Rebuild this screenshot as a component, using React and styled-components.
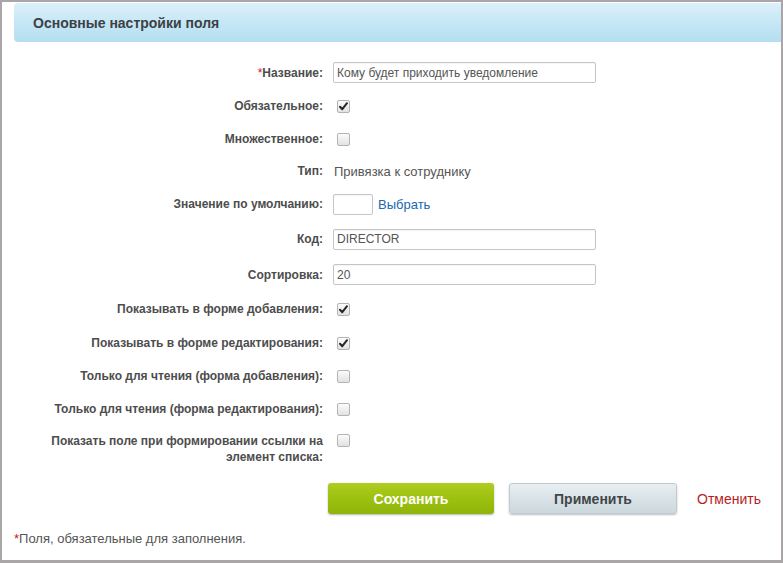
import React from "react";
import styled, { createGlobalStyle } from "styled-components";

const Global = createGlobalStyle`
  html, body { margin: 0; padding: 0; background: #fff; }
  body { font-family: "Liberation Sans", Arial, sans-serif; }
  * { box-sizing: border-box; }
`;

const Panel = styled.div`
  width: 783px;
  height: 563px;
  border: 2px solid #aaa6a8;
  border-bottom-width: 3px;
  background: #fff;
  display: flex;
  flex-direction: column;
`;

const Header = styled.div`
  margin: 1px 0 0 12px;
  height: 39px;
  display: flex;
  align-items: center;
  padding-left: 19px;
  border-radius: 4px 0 0 4px;
  background: linear-gradient(to bottom, #dbf0fa 0%, #c6e7f5 50%, #b3def0 100%);
  font-size: 14px;
  font-weight: bold;
  color: #3c4145;
`;

const Form = styled.div`
  margin-top: 14px;
  display: grid;
  grid-template-columns: 321px 1fr;
  column-gap: 10px;
`;

const Label = styled.div`
  height: ${(p) => p.$h}px;
  display: flex;
  align-items: ${(p) => (p.$top ? "flex-start" : "center")};
  justify-content: flex-end;
  padding-top: ${(p) => (p.$top ? 8 : 0)}px;
  text-align: right;
  font-size: 12px;
  line-height: 16px;
  font-weight: bold;
  color: #4d4d4d;
`;

const Req = styled.span`
  color: #d0142c;
  font-weight: normal;
`;

const Field = styled.div`
  height: ${(p) => p.$h}px;
  display: flex;
  align-items: ${(p) => (p.$top ? "flex-start" : "center")};
  padding-top: ${(p) => (p.$top ? 9 : 0)}px;
  gap: 5px;
`;

const TextInput = styled.div`
  width: ${(p) => p.$w}px;
  height: 21px;
  border: 1px solid #c5c5c5;
  border-radius: 2px;
  background: #fff;
  padding: 0 0 0 3px;
  display: flex;
  align-items: center;
  font-size: 12px;
  color: #555;
  box-shadow: inset 0 1px 1px rgba(0, 0, 0, 0.04);
`;

const Box = styled.span`
  width: 13px;
  height: 13px;
  margin-left: 4px;
  margin-top: ${(p) => (p.$top ? 0 : 1)}px;
  border: 1px solid #b3b3b3;
  border-radius: 2px;
  background: linear-gradient(to bottom, #fbfbfb, #e2e2e2);
  display: flex;
  align-items: center;
  justify-content: center;
`;

const Plain = styled.span`
  font-size: 13px;
  color: #555;
  padding-left: 1px;
`;

const Link = styled.span`
  font-size: 13px;
  color: #2067b0;
`;

const Buttons = styled.div`
  grid-column: 2;
  margin: 18px 0 0 -5px;
  display: flex;
  align-items: center;
`;

const Button = styled.div`
  width: ${(p) => p.$w}px;
  height: 31px;
  border-radius: 3px;
  display: flex;
  align-items: center;
  justify-content: center;
  font-size: 14px;
  font-weight: bold;
  margin-right: ${(p) => p.$mr}px;
  ${(p) =>
    p.$green
      ? `
    background: linear-gradient(to bottom, #b0cc20 0%, #9cc10f 50%, #8fb40a 100%);
    color: #fff;
    box-shadow: 0 1px 2px rgba(0,0,0,0.3);
  `
      : `
    background: linear-gradient(to bottom, #e8eff2 0%, #d9e3e7 50%, #ccd8dd 100%);
    border: 1px solid #c0cbd0;
    color: #414649;
    box-shadow: 0 1px 2px rgba(0,0,0,0.25);
  `}
`;

const Cancel = styled.span`
  font-size: 14px;
  color: #b81d1d;
`;

const Note = styled.div`
  margin: 17px 0 0 12px;
  font-size: 13px;
  line-height: 15px;
  color: #555;
`;

const Check = ({ on, top }) => (
  <Box $top={top}>
    {on && (
      <svg width="9" height="9" viewBox="0 0 9 9">
        <path
          d="M1 4.8 L3.3 7.2 L8 1.2"
          fill="none"
          stroke="#262626"
          strokeWidth="2"
          strokeLinecap="round"
          strokeLinejoin="round"
        />
      </svg>
    )}
  </Box>
);

const rows = [
  { h: 33, label: "Название:", req: true, kind: "input", value: "Кому будет приходить уведомление" },
  { h: 33, label: "Обязательное:", kind: "check", on: true },
  { h: 33, label: "Множественное:", kind: "check", on: false },
  { h: 32, label: "Тип:", kind: "text", value: "Привязка к сотруднику" },
  { h: 34, label: "Значение по умолчанию:", kind: "pick" },
  { h: 36, label: "Код:", kind: "input", value: "DIRECTOR" },
  { h: 35, label: "Сортировка:", kind: "input", value: "20" },
  { h: 34, label: "Показывать в форме добавления:", kind: "check", on: true },
  { h: 33, label: "Показывать в форме редактирования:", kind: "check", on: true },
  { h: 33, label: "Только для чтения (форма добавления):", kind: "check", on: false },
  { h: 33, label: "Только для чтения (форма редактирования):", kind: "check", on: false },
  {
    h: 40,
    top: true,
    label: (
      <>
        Показать поле при формировании ссылки на
        <br />
        элемент списка:
      </>
    ),
    kind: "check",
    on: false,
  },
];

const renderField = (r) => {
  switch (r.kind) {
    case "input":
      return <TextInput $w={263}>{r.value}</TextInput>;
    case "check":
      return <Check on={r.on} top={r.top} />;
    case "text":
      return <Plain>{r.value}</Plain>;
    case "pick":
      return (
        <>
          <TextInput $w={40} />
          <Link>Выбрать</Link>
        </>
      );
    default:
      return null;
  }
};

export default function App() {
  return (
    <>
      <Global />
      <Panel>
        <Header>Основные настройки поля</Header>
        <Form>
          {rows.map((r, i) => (
            <React.Fragment key={i}>
              <Label $h={r.h} $top={r.top}>
                <span>
                  {r.req && <Req>*</Req>}
                  {r.label}
                </span>
              </Label>
              <Field $h={r.h} $top={r.top}>
                {renderField(r)}
              </Field>
            </React.Fragment>
          ))}
          <Buttons>
            <Button $green $w={166} $mr={15}>
              Сохранить
            </Button>
            <Button $w={168} $mr={20}>
              Применить
            </Button>
            <Cancel>Отменить</Cancel>
          </Buttons>
        </Form>
        <Note>
          <Req>*</Req>Поля, обязательные для заполнения.
        </Note>
      </Panel>
    </>
  );
}
